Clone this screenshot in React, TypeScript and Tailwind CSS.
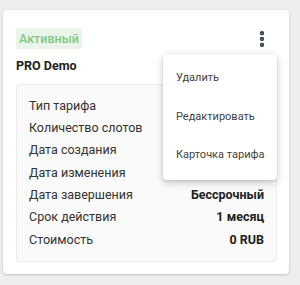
import { MoreVertical } from "lucide-react";

const ROWS = [
  { label: "Тип тарифа", value: "" },
  { label: "Количество слотов", value: "" },
  { label: "Дата создания", value: "" },
  { label: "Дата изменения", value: "" },
  { label: "Дата завершения", value: "Бессрочный" },
  { label: "Срок действия", value: "1 месяц" },
  { label: "Стоимость", value: "0 RUB" },
];

const MENU = ["Удалить", "Редактировать", "Карточка тарифа"];

export default function App() {
  return (
    <div
      className="w-[300px] h-[285px] bg-[#eeeeee] pt-[10px] pl-[3px]"
      style={{ fontFamily: "Roboto, 'Noto Sans', sans-serif" }}
    >
      <div className="relative w-[286px] h-[264px] bg-white rounded-[4px] shadow-[0_1px_3px_rgba(0,0,0,0.2)] px-[13px] pt-[18px]">
        {/* status + menu trigger */}
        <div className="flex items-center justify-between">
          <span className="h-[21px] px-[3px] rounded-[3px] bg-[#eaf5ea] text-[#80c784] text-[12.5px] font-medium leading-[21px]">
            Активный
          </span>
          <MoreVertical className="w-[20px] h-[20px] mr-[4px] text-[#2f3a4a]" strokeWidth={3.2} />
        </div>

        <div className="mt-[7px] text-[12.5px] font-bold text-[#212121] leading-[20px]">PRO Demo</div>

        {/* tariff details */}
        <div className="mt-[8px] w-[261px] bg-[#fafafa] border border-[#ececec] rounded-[4px] px-[12px] py-[10px]">
          {ROWS.map((r) => (
            <div key={r.label} className="flex justify-between h-[22.33px] items-center text-[12.5px]">
              <span className="text-[#333333]">{r.label}</span>
              <span className="font-bold text-[#212121]">{r.value}</span>
            </div>
          ))}
        </div>

        {/* dropdown */}
        <div className="absolute left-[160px] top-[44px] w-[114px] py-[5px] bg-white rounded-[4px] shadow-[0_3px_8px_rgba(0,0,0,0.18),0_1px_3px_rgba(0,0,0,0.12)]">
          {MENU.map((m) => (
            <div key={m} className="h-[38.5px] flex items-center px-[13px] text-[11px] text-[#424242] whitespace-nowrap">
              {m}
            </div>
          ))}
        </div>
      </div>
    </div>
  );
}
